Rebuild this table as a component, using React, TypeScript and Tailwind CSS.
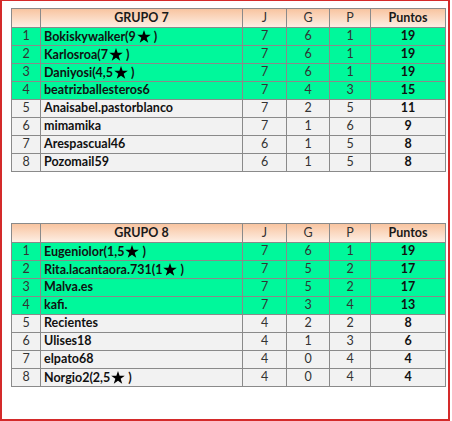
import React from 'react';

type Row = { pos: number; name: string; star?: string; j: number; g: number; p: number; pts: number };

const grupo7: Row[] = [
  { pos: 1, name: 'Bokiskywalker', star: '9', j: 7, g: 6, p: 1, pts: 19 },
  { pos: 2, name: 'Karlosroa', star: '7', j: 7, g: 6, p: 1, pts: 19 },
  { pos: 3, name: 'Daniyosi', star: '4,5', j: 7, g: 6, p: 1, pts: 19 },
  { pos: 4, name: 'beatrizballesteros6', j: 7, g: 4, p: 3, pts: 15 },
  { pos: 5, name: 'Anaisabel.pastorblanco', j: 7, g: 2, p: 5, pts: 11 },
  { pos: 6, name: 'mimamika', j: 7, g: 1, p: 6, pts: 9 },
  { pos: 7, name: 'Arespascual46', j: 6, g: 1, p: 5, pts: 8 },
  { pos: 8, name: 'Pozomail59', j: 6, g: 1, p: 5, pts: 8 },
];

const grupo8: Row[] = [
  { pos: 1, name: 'Eugeniolor', star: '1,5', j: 7, g: 6, p: 1, pts: 19 },
  { pos: 2, name: 'Rita.lacantaora.731', star: '1', j: 7, g: 5, p: 2, pts: 17 },
  { pos: 3, name: 'Malva.es', j: 7, g: 5, p: 2, pts: 17 },
  { pos: 4, name: 'kafi.', j: 7, g: 3, p: 4, pts: 13 },
  { pos: 5, name: 'Recientes', j: 4, g: 2, p: 2, pts: 8 },
  { pos: 6, name: 'Ulises18', j: 4, g: 1, p: 3, pts: 6 },
  { pos: 7, name: 'elpato68', j: 4, g: 0, p: 4, pts: 4 },
  { pos: 8, name: 'Norgio2', star: '2,5', j: 4, g: 0, p: 4, pts: 4 },
];

const cell = 'border border-[#8a8a8a] p-0 h-[18px] leading-none';

const Star = () => (
  <svg width="14" height="13" viewBox="0 0 24 23" className="inline-block align-[-2px] ml-[1px] mr-[3px]">
    <path d="M12 0l2.9 8.2H24l-7.3 5.4 2.8 8.8L12 17.1 4.5 22.4l2.8-8.8L0 8.2h9.1z" fill="#000" />
  </svg>
);

const Grupo: React.FC<{ title: string; rows: Row[] }> = ({ title, rows }) => (
  <table className="border-collapse table-fixed w-[434px] text-[12.5px] font-['Lato','Liberation_Sans',sans-serif]">
    <colgroup>
      <col className="w-[29px]" />
      <col className="w-[202px]" />
      <col className="w-[44px]" />
      <col className="w-[43px]" />
      <col className="w-[41px]" />
      <col className="w-[75px]" />
    </colgroup>
    <thead>
      <tr className="bg-gradient-to-b from-[#f8c4a0] to-[#fdf1e8]">
        <th className={`${cell} h-[19px]`}></th>
        <th className={`${cell} h-[19px] font-bold text-[#1a1a1a]`}>{title}</th>
        <th className={`${cell} h-[19px] font-normal text-[#333]`}>J</th>
        <th className={`${cell} h-[19px] font-normal text-[#333]`}>G</th>
        <th className={`${cell} h-[19px] font-normal text-[#333]`}>P</th>
        <th className={`${cell} h-[19px] font-bold text-[#1a1a1a]`}>Puntos</th>
      </tr>
    </thead>
    <tbody>
      {rows.map((r) => (
        <tr key={r.pos} className={r.pos <= 4 ? 'bg-[#00f89b]' : 'bg-[#f2f2f2]'}>
          <td className={`${cell} text-center text-[#333]`}>{r.pos}</td>
          <td className={`${cell} pl-[3px] font-bold text-[#111] whitespace-nowrap`}>
            {r.name}
            {r.star && (
              <>
                ({r.star}
                <Star />)
              </>
            )}
          </td>
          <td className={`${cell} text-center text-[#333]`}>{r.j}</td>
          <td className={`${cell} text-center text-[#333]`}>{r.g}</td>
          <td className={`${cell} text-center text-[#333]`}>{r.p}</td>
          <td className={`${cell} text-center font-bold text-[#111]`}>{r.pts}</td>
        </tr>
      ))}
    </tbody>
  </table>
);

export default function App() {
  return (
    <div className="w-[450px] h-[421px] bg-white border-l-2 border-t border-r-2 border-b-2 border-[#d42a2a] pl-[9px] pt-[7px]">
      <Grupo title="GRUPO 7" rows={grupo7} />
      <div className="h-[51px]" />
      <Grupo title="GRUPO 8" rows={grupo8} />
    </div>
  );
}
